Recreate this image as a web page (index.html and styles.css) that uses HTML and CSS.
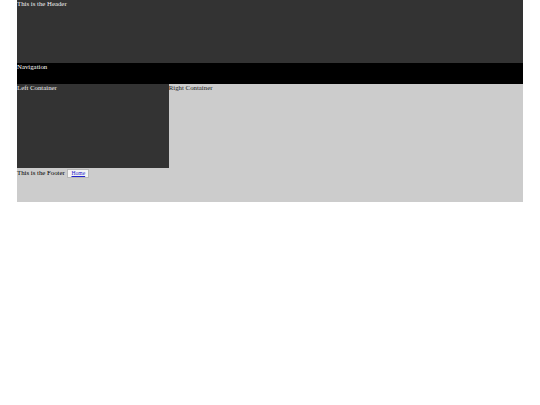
FILE: index.html
```html
<!DOCTYPE html>
<html>
<head>
<meta charset="utf-8">
<link rel="stylesheet" href="styles.css">
</head>
<body>
<div class="wrap">
  <div class="header">This is the Header</div>
  <div class="nav">Navigation</div>
  <div class="main">
    <div class="left">Left Container</div>
    <div class="right">Right Container</div>
  </div>
  <div class="footer">This is the Footer <a class="home" href="#">Home</a></div>
</div>
</body>
</html>
```
FILE: styles.css
```css
html, body {
  margin: 0;
  padding: 0;
  background: #fff;
}
.wrap {
  margin: 0 17px;
  background: #cccccc;
  font-family: "Liberation Serif", serif;
  font-size: 6.8px;
  line-height: 8px;
}
.header {
  height: 63px;
  background: #333333;
  color: #f0f0f0;
}
.nav {
  height: 21px;
  background: #000000;
  color: #ffffff;
}
.main {
  display: flex;
}
.left {
  width: 30%;
  height: 84px;
  background: #333333;
  color: #eeeeee;
}
.right {
  flex: 1;
  background: #cccccc;
  color: #1a1a1a;
}
.footer {
  height: 34px;
  color: #000000;
  padding-top: 1px;
  box-sizing: border-box;
}
.home {
  display: inline-block;
  margin-left: 1px;
  padding: 0 3px;
  line-height: 7px;
  background: #f4f4f4;
  border: 1px solid #b8b8b8;
  color: #2222cc;
  font-size: 5.6px;
}
```
